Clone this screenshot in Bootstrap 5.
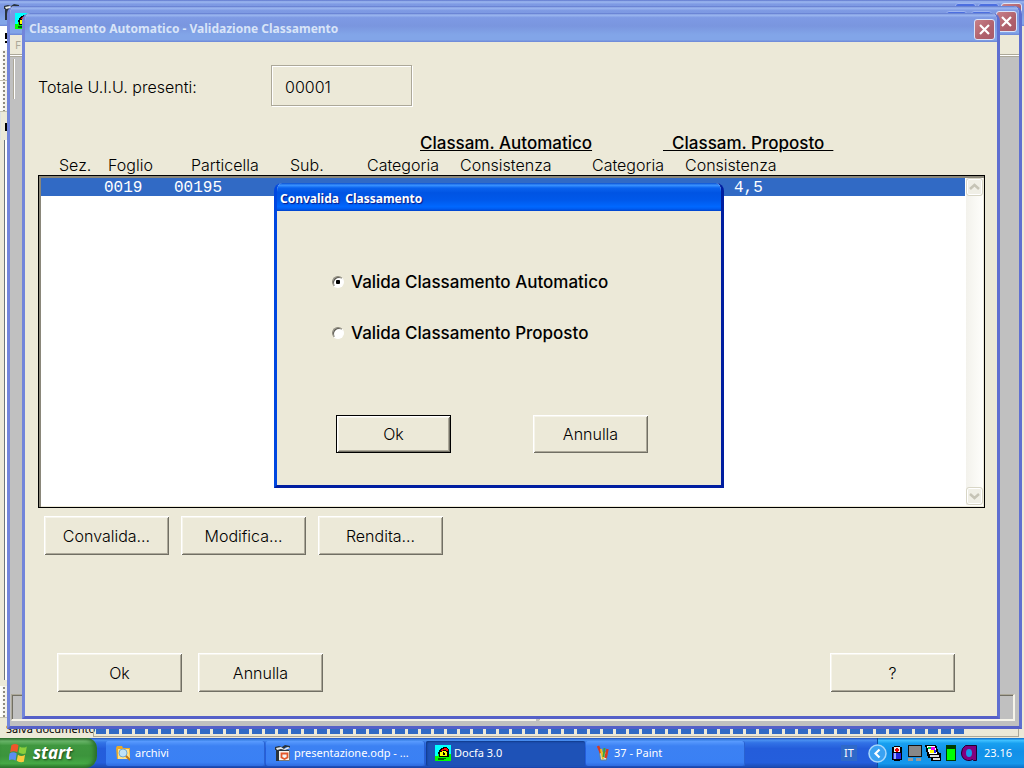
<!DOCTYPE html>
<html lang="it">
<head>
<meta charset="utf-8">
<meta name="viewport" content="width=device-width, initial-scale=1">
<title>Classamento Automatico - Validazione Classamento</title>
<link href="https://cdn.jsdelivr.net/npm/bootstrap@5.3.0/dist/css/bootstrap.min.css" rel="stylesheet">
<style>
:root{--face:#ece9d8;--ink:#000;--sel:#316ac5}
body{font:300 16px/20px Inter,"Liberation Sans",Arial,sans-serif;color:var(--ink);background:var(--face)}
.ui-font{font-family:"Noto Sans",Tahoma,sans-serif;font-weight:400}
.face{background:var(--face)}

/* windows */
.win{position:absolute;border:3px solid #7285da;border-top:0;border-right-color:#5f6fd0;border-bottom-color:#5560c8;border-radius:8px 8px 0 0;overflow:hidden}
.win-main{inset:13px 24px 19px 22px}
.win-app{inset:6px 2px 9px 7px}
.win-office{inset:0 0 0 0;border:0;border-radius:0}
.caption{flex:none;height:29px;margin:0 -3px;padding:3px 5px 0 7px;color:#d8e4f8;font-weight:700;font-size:12px;
 background:linear-gradient(#5b74cc 0,#9db8f0 7%,#7e9ae4 16%,#7a96df 45%,#82a5e8 75%,#82a5e8 92%,#6c86d6 100%)}
.caption h1,.caption h2{font:inherit;margin:0;white-space:pre}
.cap-btn{flex:none;width:21px;height:21px;padding:0;border:1px solid #dce4f8;border-radius:3px;background:linear-gradient(135deg,#c78088,#b0616c 60%,#a85a68);line-height:0}
.cap-btn.blue{background:#4c6fe0;border-color:#9db4f0}
.dlg{left:274px;top:183px;width:450px;height:305px;border-color:#0855dd #001ea0 #001ea0 #0047e0}
.dlg .caption{height:28px;padding-left:6px;color:#fff;text-shadow:1px 1px 1px #0a1883;
 background:linear-gradient(#0a4fd0 0,#3a93ff 8%,#0a62ee 18%,#0054e3 35%,#0058ea 60%,#0068ff 85%,#005cf0 93%,#0040c8 100%)}

/* classic controls */
.btn-classic{width:125px;height:39px;padding:0;border:0;background:var(--face);font:inherit;color:var(--ink);
 box-shadow:inset 1px 1px #fff,inset -1px -1px #716f64,inset 2px 2px #f6f4ea,inset -2px -2px #aca899}
.btn-classic.narrow{width:115px;height:38px}
.btn-classic.is-default{border:1px solid #000}
.count-box{width:141px;height:41px;padding:3px 13px 0;font:inherit;color:var(--ink);background:var(--face);border:1px solid #aca899;border-radius:0;box-shadow:1px 1px #fff,inset 1px 1px #fff}
.count-label{width:233px;padding-top:3px}
.heavy{font:500 17px/20px Inter,"Liberation Sans",sans-serif}
.group-heads{display:grid;grid-template-columns:243px 1fr;padding-left:382px;white-space:pre}
.col-heads{display:grid;grid-template-columns:49px 83px 99px 77px 93px 132px 93px 1fr;padding-left:21px;height:20px}
.list-frame{height:333px;background:#fff;border:1px solid #000;box-shadow:inset 2px 2px #8a877a,inset -1px -1px #ece9d8;padding:2px 1px 2px 2px}
.list-row{display:grid;grid-template-columns:70px 560px 1fr;padding-left:63px;height:18px;line-height:20px;margin-right:1px;background:var(--sel);color:#fff;font-family:"Liberation Mono",monospace}
.vscroll{width:17px;background:linear-gradient(90deg,#f3f2ec,#fefefb)}
.vscroll button{width:17px;height:18px;padding:0;border:1px solid #d8d6c6;border-radius:3px;background:#f0efe6;box-shadow:inset 0 0 0 1px #fff;line-height:0}
.radio-classic{appearance:none;width:12px;height:12px;margin:0;border-radius:50%;background:#fff;border:1px solid;border-color:#8a877a #fff #fff #8a877a;box-shadow:inset 1px 1px #5d5b52}
.radio-classic:checked{background:radial-gradient(circle,#000 2px,#fff 2.5px)}
.choice{gap:7px;height:20px;margin-bottom:31px}
.dlg-body{padding:61px 0 0 55px}

/* application frame behind */
.menu-strip{height:19px;padding-left:5px;color:#aca899;font-size:11px;line-height:19px}
.client{background:#c0c0c0;border-top:1px solid #aca899;box-shadow:inset 0 1px #fff,inset 0 2px #aca899}
.raised-edge{width:2px;height:40px;margin:4px 0 0 3px;background:linear-gradient(90deg,#aca899 50%,#fff 50%)}
.pane{height:27px;border:1px solid #aca899;border-right:2px solid #f6f4ea;border-bottom:2px solid #f6f4ea;box-shadow:inset 1px 1px #716f64}
.panes{gap:3px;margin:0 4px 5px 1px}

/* office window */
.gutter{width:7px}
.grip{background:radial-gradient(circle,#8f8c80 1px,transparent 1.5px) 2px 4px/4px 4px repeat-y,linear-gradient(90deg,#fff,#f2f0e6);border-bottom:1px solid #c5c2b0}
.progress-cells{height:5px;width:869px;background:repeating-linear-gradient(90deg,var(--sel) 0 10px,var(--face) 10px 13px)}
.status-office{position:absolute;inset:auto 0 0 0;height:20px;font-size:11px;line-height:14px}
.status-text{width:93px;padding:4px 0 0 6px;white-space:nowrap}
.status-office .inset-box{border:1px solid #aca899;border-top:0;margin:0 5px 1px 0;padding:11px 0 0 2px}

/* taskbar */
.taskbar{height:30px;font-size:11px;color:#fff;background:linear-gradient(#1f4fbe 0,#4a90f0 7%,#3272e6 16%,#245ddb 35%,#245edc 82%,#1d4eb8 95%,#1941a5)}
.start-btn{width:97px;padding:0 0 0 9px;gap:5px;border:0;border-radius:0 10px 12px 0;color:#fff;font:italic 700 17px/20px "Noto Sans",sans-serif;text-shadow:1px 1px 2px #1c4a1c;
 background:linear-gradient(#2f6b2f 0,#6cb86c 10%,#3f973f 25%,#3c943c 60%,#45a845 85%,#2d7a2d);box-shadow:inset -3px 0 4px #2a6e2a}
.task-btn{width:159px;height:25px;padding:0 9px;gap:3px;border:0;border-radius:2px;color:#fff;font:inherit;text-align:left;background:linear-gradient(#5a9cff 0,#3c81f3 20%,#3a80f4 85%,#2e6be0);box-shadow:inset -1px 0 #2a62d0}
.task-btn.active{background:#1e52b7;box-shadow:inset 1px 1px 2px #103a88}
.lang{width:16px;height:16px;background:#2f69c8;line-height:16px;margin-right:20px}
.tray{width:147px;gap:2px;padding-right:12px;background:linear-gradient(#0f6ac8 0,#3fc0ff 8%,#18a0f0 18%,#1290e8 45%,#1597ec 85%,#0c6fc6);box-shadow:inset 1px 0 #0a4aa0}
.tray-arrow{margin-left:-9px;width:19px;height:19px;padding:0;border:0;background:none;line-height:0}
</style>
</head>
<body class="vh-100 d-flex flex-column overflow-hidden">
<svg width="0" height="0" class="position-absolute" aria-hidden="true">
 <symbol id="i-x" viewBox="0 0 19 19"><path d="M5 5l9 9M14 5l-9 9" stroke="#fff" stroke-width="2.2" fill="none"/></symbol>
 <symbol id="i-house" viewBox="0 0 16 16" shape-rendering="crispEdges"><path fill="#0ff" d="M0 0h16v16H0z"/><path fill="#0f0" d="M0 11h3V9h2v3h8V9h3v7H0z"/><path fill="#000" d="M3 7h1V5h1V4h1V3h2V2h4v1h1v1h1v8H4V9H3z"/><path fill="#f00" d="M6 5h1V4h2V3h3v1h1v2h-2V5H8v1H6z"/><path fill="#ff0" d="M5 7h2V6h4v1h1v4H5z"/><path fill="#000" d="M8 7h2v3H8z"/><path fill="#ff0" d="M9 7h1v1H9z"/><path fill="#060" d="M3 13h8v1H9v1H3z"/></symbol>
 <symbol id="i-office" viewBox="0 0 16 16"><path fill="#f4f4f0" stroke="#777" d="M3.500 5.500h11v10h-11z"/><path fill="#29333b" d="M0 2l4-1 3 1 3-2 5 1v2l-4-1-2 2 5 1v1H4v10H1V5H0z"/><path fill="#e8ecee" d="M1 3l5-1 3 2 4-2 2 1-5 2-4-1-4 1z"/><path fill="none" stroke="#e4572a" stroke-width="1.800" d="M6.500 8.500h6v4l-3 1.500-3-1.500z"/></symbol>
</svg>

<main class="position-relative flex-grow-1 overflow-hidden">

 <section class="win win-office face d-flex flex-column" aria-label="Presentazione">
  <div class="caption d-flex justify-content-between m-0 p-0" style="height:26px">
   <svg width="16" height="16" class="ms-1 mt-1"><use href="#i-office"/></svg>
   <span class="d-flex" style="gap:2px;padding:3px 2px 0 0"><button class="cap-btn blue" aria-label="Riduci"></button><button class="cap-btn blue" aria-label="Ingrandisci"></button><button class="cap-btn" aria-label="Chiudi"></button></span>
  </div>
  <div class="gutter d-flex flex-column flex-grow-1">
   <div class="bg-white d-flex justify-content-end align-items-center" style="height:24px"><svg width="2" height="10"><path d="M0 0h2v6H0zM0 8h2v2H0z"/></svg></div>
   <div class="grip" style="height:31px"></div>
   <div class="grip" style="height:31px"></div>
   <div class="d-flex justify-content-end border-start" style="height:28px"><svg width="2" height="20"><path d="M0 11h2v8H0z"/></svg></div>
   <div class="flex-grow-1 bg-white border-start border-secondary ms-1"></div>
   <div class="grip" style="height:32px;margin-top:6px"></div>
   <div style="height:20px"></div>
  </div>
  <div class="status-office ui-font face d-flex">
   <span class="status-text">Salva documento</span>
   <div class="inset-box flex-grow-1"><div class="progress-cells"></div></div>
  </div>
 </section>

 <section class="win win-app face d-flex flex-column" aria-label="Docfa 3.0">
  <div class="caption d-flex justify-content-between ps-1">
   <svg width="16" height="16" class="ms-1" style="margin-top:4px"><use href="#i-house"/></svg>
   <span class="d-flex gap-1" style="padding-top:2px"><button class="cap-btn blue" aria-label="Riduci"></button><button class="cap-btn blue" aria-label="Ingrandisci"></button><button class="cap-btn" aria-label="Chiudi"><svg width="19" height="19"><use href="#i-x"/></svg></button></span>
  </div>
  <div class="menu-strip ui-font">F</div>
  <div class="client flex-grow-1 d-flex flex-column justify-content-between">
   <div class="raised-edge"></div>
   <div class="panes d-flex"><div class="pane" style="width:525px"></div><div class="pane flex-grow-1"></div></div>
  </div>
 </section>

 <section class="win win-main face d-flex flex-column">
  <div class="caption ui-font fw-bold d-flex justify-content-between align-items-center"><h1>Classamento Automatico - Validazione Classamento</h1><button class="cap-btn" aria-label="Chiudi"><svg width="19" height="19"><use href="#i-x"/></svg></button></div>
  <div class="flex-grow-1 d-flex flex-column" style="padding:23px 12px 24px 13px">
   <div class="d-flex align-items-center"><label class="count-label" for="tot">Totale U.I.U. presenti:</label><input id="tot" class="count-box" type="text" value="00001" readonly></div>
   <div class="group-heads heavy" style="margin-top:27px"><span><u>Classam. Automatico</u></span><span><u>  Classam. Proposto  </u></span></div>
   <div class="col-heads" style="margin-top:2px"><span>Sez.</span><span>Foglio</span><span>Particella</span><span>Sub.</span><span>Categoria</span><span>Consistenza</span><span>Categoria</span><span>Consistenza</span></div>
   <div class="list-frame d-flex">
    <div class="flex-grow-1" role="listbox" aria-label="Unità immobiliari"><div class="list-row" role="option" aria-selected="true"><span>0019</span><span>00195</span><span>4,5</span></div></div>
    <div class="vscroll d-flex flex-column justify-content-between">
     <button aria-label="Su"><svg width="13" height="14"><path d="M2 9l4.500-4L11 9" fill="none" stroke="#c6c4b6" stroke-width="2.500"/></svg></button>
     <button aria-label="Giù"><svg width="13" height="14"><path d="M2 5l4.500 4L11 5" fill="none" stroke="#c6c4b6" stroke-width="2.500"/></svg></button>
    </div>
   </div>
   <div class="d-flex mt-2 ms-1" style="gap:12px;padding-left:2px"><button class="btn-classic">Convalida...</button><button class="btn-classic">Modifica...</button><button class="btn-classic">Rendita...</button></div>
   <div class="d-flex mt-auto gap-3" style="padding:0 30px 0 19px"><button class="btn-classic">Ok</button><button class="btn-classic">Annulla</button><button class="btn-classic ms-auto">?</button></div>
  </div>
 </section>

 <section class="win dlg face" role="dialog" aria-labelledby="dlg-title">
  <div class="caption ui-font fw-bold d-flex align-items-center"><h2 id="dlg-title">Convalida  Classamento</h2></div>
  <form class="dlg-body">
   <div class="choice d-flex align-items-center"><input class="radio-classic" type="radio" name="tipo" id="r1" checked><label class="heavy" for="r1">Valida Classamento Automatico</label></div>
   <div class="choice d-flex align-items-center"><input class="radio-classic" type="radio" name="tipo" id="r2"><label class="heavy" for="r2">Valida Classamento Proposto</label></div>
   <div class="d-flex ms-1" style="gap:82px;padding-top:41px"><button type="button" class="btn-classic narrow is-default">Ok</button><button type="button" class="btn-classic narrow">Annulla</button></div>
  </form>
 </section>
</main>

<footer class="taskbar ui-font flex-shrink-0 d-flex">
 <button class="start-btn d-flex align-items-center">
  <svg width="19" height="19" viewBox="1 2 16 16"><path fill="#f0562b" d="M3 3q3-2 6 0L8 9Q5 7 2 9z"/><path fill="#8ccf3c" d="M10 4q3 2 6 0l-1 6q-3 1-6-1z"/><path fill="#5c8df0" d="M1.500 10q3-2 6 0l-1 6q-3-2-6 0z"/><path fill="#fbca3c" d="M8.500 11q3 2 6 0l-1 6q-3 1-6-1z"/></svg>start</button>
 <nav class="d-flex align-items-center flex-grow-1" style="gap:1px;padding-left:9px" aria-label="Applicazioni">
  <button class="task-btn d-flex align-items-center"><svg width="17" height="16"><path fill="#e8a92a" d="M1 3l1-2h5l1 2h7v11H2z"/><path fill="#ffe28a" d="M3 4h11l1 10H3z"/><circle cx="8" cy="8" r="4" fill="#bfe3fa" stroke="#6fa8d8"/><path stroke="#c07818" stroke-width="2" d="M11 11l4 4"/></svg>archivi</button>
  <button class="task-btn d-flex align-items-center"><svg width="16" height="16"><use href="#i-office"/></svg>presentazione.odp - ...</button>
  <button class="task-btn active d-flex align-items-center" ><svg width="16" height="16"><use href="#i-house"/></svg>Docfa 3.0</button>
  <button class="task-btn d-flex align-items-center"><svg width="16" height="16"><path fill="#d9e6e0" stroke="#6d7f86" d="M4.500 7h8l-1 8h-6z"/><path stroke="#d83a20" stroke-width="2.500" d="M3 1l3 7M12.500 4l-2 9"/><path stroke="#f0c020" stroke-width="2" d="M6 4l2 10"/><path stroke="#3fa23c" stroke-width="2" d="M9.500 3l-1 9"/></svg>37 - Paint</button>
 </nav>
 <span class="lang text-center align-self-center">IT</span>
 <div class="tray d-flex align-items-center flex-shrink-0">
  <button class="tray-arrow" aria-label="Mostra icone"><svg width="19" height="19"><circle cx="9.500" cy="9.500" r="8.500" fill="#3aa2f2" stroke="#a8d8fb" stroke-width="1.500"/><path d="M11.500 5.500l-4 4 4 4" fill="none" stroke="#fff" stroke-width="2.200"/></svg></button>
  <svg width="16" height="16" shape-rendering="crispEdges"><path d="M5 1h6v1h2v13h-2v1H5v-1H3V2h2z"/><path fill="#eee" d="M5 2h6v5H5z"/><path fill="#e00" d="M7 3h2v1h1v2H9v1H7V6H6V4h1z"/><path fill="#22d" d="M4 8h8v6H4z"/><path fill="#9af" d="M5 8h2v6H5z"/></svg>
  <svg width="16" height="16" shape-rendering="crispEdges"><path fill="#111" d="M1 0h14v12H1z"/><path fill="#888" d="M2 1h12v10H2z"/><path fill="#999" d="M1 13h5v3H1zM9 13h5v3H9z"/></svg>
  <svg width="16" height="16" shape-rendering="crispEdges"><path d="M0 0h11l3 8h2v8H6v-3H3z"/><path fill="#fff" d="M2 1h8l2 8H4z"/><path fill="#0c4" d="M3 2h3v2H3z"/><path fill="#e0e" d="M6 2h4v3H6z"/><path fill="#ff0" d="M5 5h4v3H5z"/><path fill="#22f" d="M9 5h2v3H9z"/><path fill="#ddd" d="M5 10h9v2H5zM8 13h7v2H8z"/></svg>
  <svg width="16" height="16" shape-rendering="crispEdges"><path fill="#003c00" d="M3 0h10v16H3z"/><path fill="#0f0" d="M4 4h8v11H4z"/></svg>
  <svg width="16" height="16"><path fill="#800080" stroke="#200030" d="M4.500.5h11v15h-3l-1-1q-2 1.500-5 1Q.5 14 .5 8 .5 3 4.500.5z"/><ellipse cx="8" cy="8" rx="3" ry="4" fill="#1597ec"/></svg>
  <span class="ms-auto">23.16</span>
 </div>
</footer>
<script src="https://cdn.jsdelivr.net/npm/bootstrap@5.3.0/dist/js/bootstrap.bundle.min.js"></script>
</body>
</html>
